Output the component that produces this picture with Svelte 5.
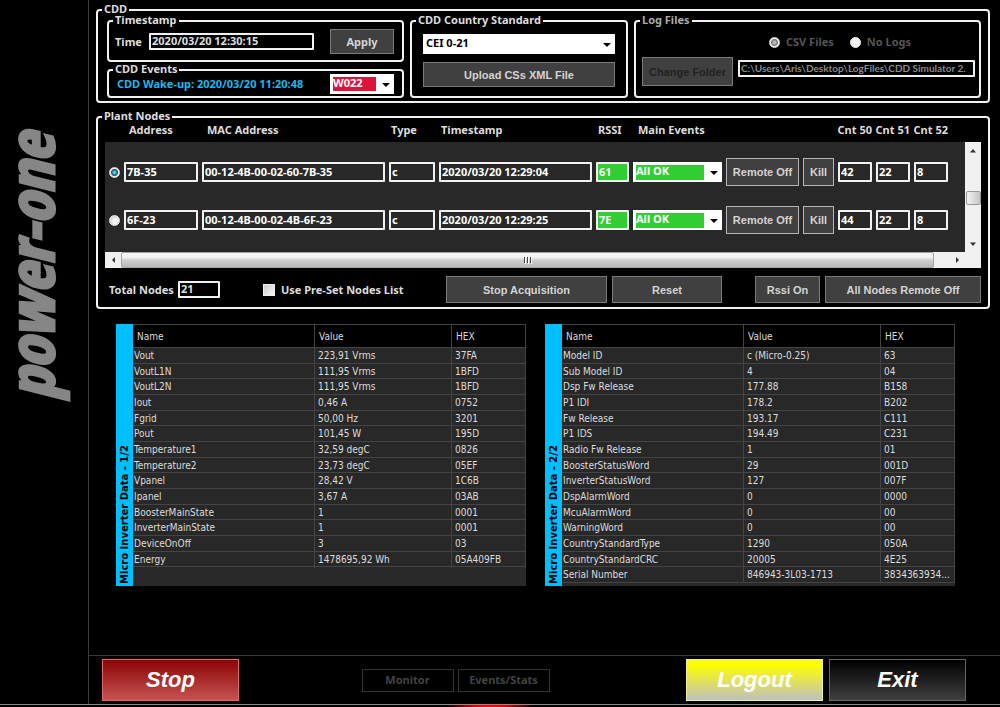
<script>
  const nodes = $state([
    { address: '7B-35', mac: '00-12-4B-00-02-60-7B-35', type: 'c', time: '2020/03/20 12:29:04', rssi: '61', counts: ['42', '22', '8'] },
    { address: '6F-23', mac: '00-12-4B-00-02-4B-6F-23', type: 'c', time: '2020/03/20 12:29:25', rssi: '7E', counts: ['44', '22', '8'] }
  ]);
  let selected = $state('7B-35');
  let time = $state('2020/03/20 12:30:15');
  let total = $state('21');
  let preset = $state(false);

  const panels = [
    {
      title: 'Micro Inverter Data - 1/2',
      rows: [
        ['Vout', '223,91 Vrms', '37FA'],
        ['VoutL1N', '111,95 Vrms', '1BFD'],
        ['VoutL2N', '111,95 Vrms', '1BFD'],
        ['Iout', '0,46 A', '0752'],
        ['Fgrid', '50,00 Hz', '3201'],
        ['Pout', '101,45 W', '195D'],
        ['Temperature1', '32,59 degC', '0826'],
        ['Temperature2', '23,73 degC', '05EF'],
        ['Vpanel', '28,42 V', '1C6B'],
        ['Ipanel', '3,67 A', '03AB'],
        ['BoosterMainState', '1', '0001'],
        ['InverterMainState', '1', '0001'],
        ['DeviceOnOff', '3', '03'],
        ['Energy', '1478695,92 Wh', '05A409FB']
      ]
    },
    {
      title: 'Micro Inverter Data - 2/2',
      rows: [
        ['Model ID', 'c (Micro-0.25)', '63'],
        ['Sub Model ID', '4', '04'],
        ['Dsp Fw Release', '177.88', 'B158'],
        ['P1 IDI', '178.2', 'B202'],
        ['Fw Release', '193.17', 'C111'],
        ['P1 IDS', '194.49', 'C231'],
        ['Radio Fw Release', '1', '01'],
        ['BoosterStatusWord', '29', '001D'],
        ['InverterStatusWord', '127', '007F'],
        ['DspAlarmWord', '0', '0000'],
        ['McuAlarmWord', '0', '00'],
        ['WarningWord', '0', '00'],
        ['CountryStandardType', '1290', '050A'],
        ['CountryStandardCRC', '20005', '4E25'],
        ['Serial Number', '846943-3L03-1713', '3834363934...']
      ]
    }
  ];
</script>

<div class="app">
  <div class="body">
    <aside><div class="brand">power-one</div></aside>

    <div class="work">
      <main>
        <fieldset class="cdd">
          <legend>CDD</legend>
          <div class="cdd-grid">
            <div class="stack">
              <fieldset class="stamp">
                <legend>Timestamp</legend>
                <div class="line">
                  <label for="time">Time</label>
                  <input id="time" class="field grow" bind:value={time} />
                  <button class="btn tahoma apply">Apply</button>
                </div>
              </fieldset>
              <fieldset class="events">
                <legend>CDD Events</legend>
                <div class="line">
                  <label class="wake" for="event">CDD Wake-up: 2020/03/20 11:20:48</label>
                  <span class="pick small">
                    <select id="event" class="alert"><option>W022</option></select>
                  </span>
                </div>
              </fieldset>
            </div>

            <fieldset class="country">
              <legend>CDD Country Standard</legend>
              <div class="country-body">
                <span class="pick">
                  <select aria-label="CDD Country Standard"><option>CEI 0-21</option></select>
                </span>
                <button class="btn">Upload CSs XML File</button>
              </div>
            </fieldset>

            <fieldset class="logs">
              <legend>Log Files</legend>
              <div class="log-modes">
                <label><input type="radio" name="log" checked disabled />CSV Files</label>
                <label><input type="radio" name="log" disabled />No Logs</label>
              </div>
              <div class="log-path">
                <button class="btn off" disabled>Change Folder</button>
                <input class="field grow dim" aria-label="Log folder" readonly value={'C:\\Users\\Aris\\Desktop\\LogFiles\\CDD Simulator 2.'} />
              </div>
            </fieldset>
          </div>
        </fieldset>

        <fieldset class="plant">
          <legend>Plant Nodes</legend>
          <div class="scroller">
            <table class="nodes">
              <thead>
                <tr>
                  <th></th>
                  <th class="wide">Address</th>
                  <th class="wide">MAC Address</th>
                  <th>Type</th>
                  <th>Timestamp</th>
                  <th>RSSI</th>
                  <th class="wide">Main Events</th>
                  <th></th>
                  <th></th>
                  <th class="cnt">Cnt 50</th>
                  <th class="cnt">Cnt 51</th>
                  <th class="cnt">Cnt 52</th>
                </tr>
              </thead>
              <tbody>
                {#each nodes as node}
                  <tr>
                    <td><input type="radio" name="node" value={node.address} bind:group={selected} aria-label={node.address} /></td>
                    <td><input class="field" aria-label="Address" bind:value={node.address} /></td>
                    <td><input class="field" aria-label="MAC Address" bind:value={node.mac} /></td>
                    <td><input class="field" aria-label="Type" bind:value={node.type} /></td>
                    <td><input class="field" aria-label="Timestamp" bind:value={node.time} /></td>
                    <td><input class="field good" aria-label="RSSI" bind:value={node.rssi} /></td>
                    <td>
                      <span class="pick"><select class="ok" aria-label="Main Events"><option>All OK</option></select></span>
                    </td>
                    <td><button class="btn bright">Remote Off</button></td>
                    <td><button class="btn bright">Kill</button></td>
                    {#each node.counts as count, i}
                      <td><input class="field" aria-label={`Cnt 5${i}`} value={count} /></td>
                    {/each}
                  </tr>
                {/each}
              </tbody>
            </table>

            <div class="vbar" aria-hidden="true">
              <svg width="8" height="5" viewBox="0 0 8 5"><path d="M1 4.500 L4 1 L7 4.500Z" fill="#333" /></svg>
              <i class="vthumb"></i>
              <svg width="8" height="5" viewBox="0 0 8 5"><path d="M1 .5 L4 4 L7 .5Z" fill="#333" /></svg>
            </div>
            <div class="hbar" aria-hidden="true">
              <span class="arrow"><svg width="5" height="8" viewBox="0 0 5 8"><path d="M4 1 L1 4 L4 7Z" fill="#333" /></svg></span>
              <i class="hthumb">
                <svg width="9" height="7" viewBox="0 0 9 7"><path d="M1.500 0V6M4.500 0V6M7.500 0V6" stroke="#444" /><path d="M2.500 1V7M5.500 1V7M8.500 1V7" stroke="#fff" /></svg>
              </i>
              <span class="arrow"><svg width="5" height="8" viewBox="0 0 5 8"><path d="M1 1 L4 4 L1 7Z" fill="#333" /></svg></span>
            </div>
            <i class="corner"></i>
          </div>

          <div class="actions">
            <label for="total">Total Nodes</label>
            <input id="total" class="field total" bind:value={total} />
            <label class="preset"><input type="checkbox" bind:checked={preset} />Use Pre-Set Nodes List</label>
            <div class="buttons">
              <button class="btn acquire">Stop Acquisition</button>
              <button class="btn reset">Reset</button>
              <button class="btn rssi">Rssi On</button>
              <button class="btn all">All Nodes Remote Off</button>
            </div>
          </div>
        </fieldset>

        <div class="panels">
          {#each panels as panel}
            <section class="panel">
              <h2>{panel.title}</h2>
              <table class="data">
                <thead>
                  <tr><th>Name</th><th>Value</th><th>HEX</th></tr>
                </thead>
                <tbody>
                  {#each panel.rows as row}
                    <tr>
                      {#each row as cell}<td>{cell}</td>{/each}
                    </tr>
                  {/each}
                </tbody>
              </table>
            </section>
          {/each}
        </div>
      </main>

      <footer>
        <button class="big stop">Stop</button>
        <div class="tabs">
          <button disabled>Monitor</button>
          <button disabled>Events/Stats</button>
        </div>
        <div class="session">
          <button class="big logout">Logout</button>
          <button class="big exit">Exit</button>
        </div>
      </footer>
    </div>
  </div>
  <div class="glow"></div>
</div>

<style>
  :global(body) {
    margin: 0;
    background: #000;
  }
  .app,
  .app * {
    box-sizing: border-box;
  }
  .app {
    min-height: 100vh;
    display: flex;
    flex-direction: column;
    background: #000;
    color: #ddd;
    font: bold 11px/14px 'Noto Sans', 'Open Sans', sans-serif;
  }
  .body {
    flex: 1;
    display: flex;
  }
  aside {
    width: 89px;
    flex: none;
    border-right: 1px solid #3a3a3a;
    padding: 134px 0 0 2px;
  }
  .brand {
    writing-mode: vertical-rl;
    rotate: 180deg;
    color: #868686;
    font: italic bold 62px/56px 'Liberation Sans Narrow', 'Open Sans Condensed', 'DejaVu Sans Condensed', sans-serif;
    -webkit-text-stroke: 3px #868686;
    white-space: nowrap;
  }
  .work {
    flex: 1;
    min-width: 0;
    display: flex;
    flex-direction: column;
  }
  main {
    flex: 1;
    padding: 6px 10px 0 7px;
  }

  fieldset {
    margin: 0;
    padding: 0;
    min-width: 0;
    border: 2px solid #f2f2f2;
    border-radius: 4px;
  }
  legend {
    padding: 0 2px 2px;
    margin-left: 4px;
    line-height: 6px;
    white-space: nowrap;
  }
  label {
    white-space: nowrap;
  }

  button,
  input,
  select {
    font: inherit;
    color: inherit;
    margin: 0;
  }
  .field {
    display: block;
    width: 100%;
    min-width: 0;
    height: 20px;
    padding: 0 1px 2px;
    border: 2px solid #f2f2f2;
    border-radius: 1px;
    background: transparent;
    color: #fff;
  }
  .field.grow {
    flex: 1;
    height: 17px;
    color: #ddd;
  }
  .field.dim {
    color: #8a8a8a;
    font: bold 10px/12px Lato, 'Noto Sans', sans-serif;
  }
  .field.good {
    background: #32cd32;
  }
  .btn {
    padding: 0;
    border: 1px solid #7a7a7a;
    border-radius: 0;
    background: #404040;
    color: #d4d4d4;
    font-family: 'Liberation Sans', Arial, sans-serif;
    white-space: nowrap;
  }
  .btn.tahoma {
    font-family: inherit;
  }
  .btn.bright {
    width: 100%;
    height: 28px;
    border-color: #b4b4b4;
  }
  .btn.off {
    color: #222;
  }

  .pick {
    position: relative;
    display: block;
  }
  .pick::after {
    content: '';
    position: absolute;
    right: 4px;
    top: 50%;
    margin-top: -1px;
    border: 4px solid transparent;
    border-top-color: #000;
    border-bottom: 0;
    pointer-events: none;
  }
  select {
    appearance: none;
    display: block;
    width: 100%;
    height: 20px;
    padding: 0 3px 2px;
    border: 0;
    border-radius: 0;
    background-color: #fff;
    background-repeat: no-repeat;
    background-position: 3px 3px;
    color: #000;
  }
  .alert {
    background-image: linear-gradient(#dc143c, #dc143c);
    background-size: calc(100% - 21px) 14px;
    color: #fff;
  }
  .ok {
    background-image: linear-gradient(#32cd32, #32cd32);
    background-size: calc(100% - 21px) 15px;
    color: #fff;
  }

  input[type='radio'],
  input[type='checkbox'] {
    appearance: none;
    flex: none;
    width: 11px;
    height: 11px;
    border: 1px solid #eee;
    border-radius: 50%;
    background: radial-gradient(circle at 60% 60%, #f4f4f4 30%, #bbb);
  }
  input[type='checkbox'] {
    width: 12px;
    height: 12px;
    border-radius: 0;
    background: linear-gradient(135deg, #ccc, #f6f6f6);
  }
  input[type='radio']:checked {
    border-color: #ddd;
    background: radial-gradient(circle, #5fc4e8 1px, #12506e 3px, #f4f4f4 4px);
  }
  input[type='radio']:disabled {
    background: #f2f2f2;
  }
  input[type='radio']:disabled:checked {
    background: radial-gradient(circle, #bbb 1px, #777 3px, #f4f4f4 4px);
  }

  .cdd-grid {
    display: grid;
    grid-template-columns: 297px 218px 1fr;
    gap: 6px;
    padding: 3px 7px 3px 9px;
  }
  .stack {
    display: flex;
    flex-direction: column;
    gap: 4px;
  }
  .line {
    display: flex;
    align-items: center;
  }
  .stamp .line {
    padding: 4px 8px 6px 6px;
  }
  .stamp label {
    width: 34px;
  }
  .apply {
    width: 64px;
    height: 25px;
    margin-left: 16px;
  }
  .events .line {
    justify-content: space-between;
    padding: 0 8px 2px;
  }
  .wake {
    color: #1cb8f0;
  }
  .small {
    width: 64px;
  }
  .country-body {
    display: flex;
    flex-direction: column;
    gap: 8px;
    padding: 9px 11px;
  }
  .country .btn {
    height: 25px;
  }
  .logs legend {
    color: #aaa;
  }
  .log-modes {
    display: flex;
    justify-content: center;
    gap: 16px;
    padding: 10px 0 8px 65px;
    color: #555;
  }
  .log-modes label {
    display: flex;
    align-items: center;
    gap: 6px;
  }
  .log-path {
    display: flex;
    gap: 5px;
    padding: 0 4px 0 6px;
  }
  .log-path .btn {
    width: 91px;
    height: 29px;
  }
  .log-path .field {
    margin-top: 3px;
  }

  .plant {
    margin-top: 10px;
  }
  .scroller {
    display: grid;
    grid-template-columns: 1fr 16px;
    margin: 0 7px;
  }
  .nodes {
    display: block;
  }
  .nodes thead,
  .nodes tbody {
    display: block;
  }
  .nodes tr {
    display: grid;
    grid-template-columns: 11px 74px 183fr 46px 153fr 33px 89px 73px 31px 34px 34px 34px;
    gap: 4px;
    align-items: center;
    padding: 0 17px 0 4px;
  }
  .nodes th,
  .nodes td {
    padding: 0;
    min-width: 0;
    text-align: left;
    white-space: nowrap;
  }
  .nodes thead tr {
    height: 21px;
    padding-bottom: 4px;
  }
  .nodes th {
    padding-left: 2px;
  }
  .nodes th.wide {
    padding-left: 5px;
  }
  .nodes th.cnt {
    padding: 0;
    display: flex;
    justify-content: flex-end;
  }
  .nodes tbody {
    padding: 6px 0 8px;
    background: #282828;
  }
  .nodes tbody tr {
    height: 48px;
  }
  .nodes input[type='radio'] {
    display: block;
  }
  .vbar {
    margin-top: 21px;
    padding: 6px 0 5px;
    display: flex;
    flex-direction: column;
    align-items: center;
    justify-content: space-between;
    background: #f0f0f0;
  }
  .vthumb {
    width: 15px;
    height: 14px;
    border: 1px solid #999;
    border-radius: 2px;
    background: linear-gradient(90deg, #f4f4f4, #c4c4c8);
  }
  .hbar {
    display: flex;
    height: 16px;
    background: #f0f0f0;
  }
  .arrow {
    width: 16px;
    display: grid;
    place-items: center;
  }
  .hthumb {
    flex: 1;
    margin-right: 15px;
    display: grid;
    place-items: center;
    border: 1px solid #a4a4a4;
    border-radius: 2px;
    background: linear-gradient(#f4f4f4 30%, #d0d0d2 50%, #b8b8ba);
  }
  .corner {
    background: #f0f0f0;
  }
  .actions {
    display: flex;
    align-items: center;
    padding: 8px 7px 4px 11px;
  }
  .actions label {
    width: 69px;
  }
  .field.total {
    width: 42px;
    height: 17px;
    color: #ddd;
  }
  .actions .preset {
    width: auto;
    display: flex;
    align-items: center;
    gap: 6px;
    margin-left: 43px;
  }
  .buttons {
    display: flex;
    gap: 5px;
    margin-left: auto;
  }
  .buttons .btn {
    height: 27px;
  }
  .acquire {
    width: 161px;
  }
  .reset {
    width: 110px;
    margin-right: 28px;
  }
  .rssi {
    width: 65px;
  }
  .all {
    width: 156px;
  }

  .panels {
    display: grid;
    grid-template-columns: 1fr 1fr;
    gap: 19px;
    padding: 15px 35px 16px 20px;
    font: 10px/16px 'DejaVu Sans Condensed', 'Noto Sans', sans-serif;
  }
  .panel {
    display: flex;
    height: 262px;
    background: #282828;
  }
  h2 {
    flex: none;
    width: 17px;
    margin: 0;
    padding-top: 2px;
    writing-mode: vertical-rl;
    rotate: 180deg;
    background: #00bfff;
    color: #000;
    font: bold 10px/17px 'DejaVu Sans', Verdana, sans-serif;
    white-space: nowrap;
  }
  .data {
    flex: 1;
    display: block;
    border-top: 1px solid #444;
  }
  .data thead {
    display: block;
    background: #000;
  }
  .data tbody {
    display: grid;
    grid-template-rows: repeat(15, minmax(0, 1fr));
    height: 235px;
  }
  .data tr {
    display: grid;
    grid-template-columns: 1fr 137px 74px;
    border-bottom: 1px solid #444;
  }
  .data thead tr {
    height: 23px;
  }
  .data th,
  .data td {
    padding: 0 0 0 3px;
    border-right: 1px solid #444;
    text-align: left;
    font-weight: normal;
    white-space: nowrap;
  }
  .data td:first-child {
    padding-left: 1px;
  }
  .data th {
    padding-left: 4px;
    line-height: 23px;
  }

  footer {
    display: flex;
    align-items: center;
    justify-content: space-between;
    height: 49px;
    padding: 0 34px 0 13px;
    border-top: 1px solid #3a3a3a;
  }
  .big {
    width: 137px;
    height: 42px;
    padding: 0;
    border: 1px solid;
    color: #fff;
    font: italic bold 22px/24px 'Liberation Sans', Arial, sans-serif;
  }
  .stop {
    border-color: #e06a6a;
    background: linear-gradient(#8c0505, #c65252);
  }
  .logout {
    border-color: #f0f0a0;
    background: linear-gradient(#ffff00 10%, #c0c0c0);
  }
  .exit {
    border-color: #666;
    background: linear-gradient(#000, #404040);
  }
  .tabs {
    display: flex;
    gap: 4px;
    margin-right: 14px;
  }
  .tabs button {
    width: 92px;
    height: 23px;
    padding: 0;
    border: 1px solid #333;
    background: #000;
    color: #444;
  }
  .session {
    display: flex;
    gap: 6px;
  }
  .glow {
    height: 3px;
    border-top: 1px solid #8a8a8a;
    background: radial-gradient(ellipse 44px 5px at 49% 0, #ff0000 30%, transparent) #000;
  }
</style>
